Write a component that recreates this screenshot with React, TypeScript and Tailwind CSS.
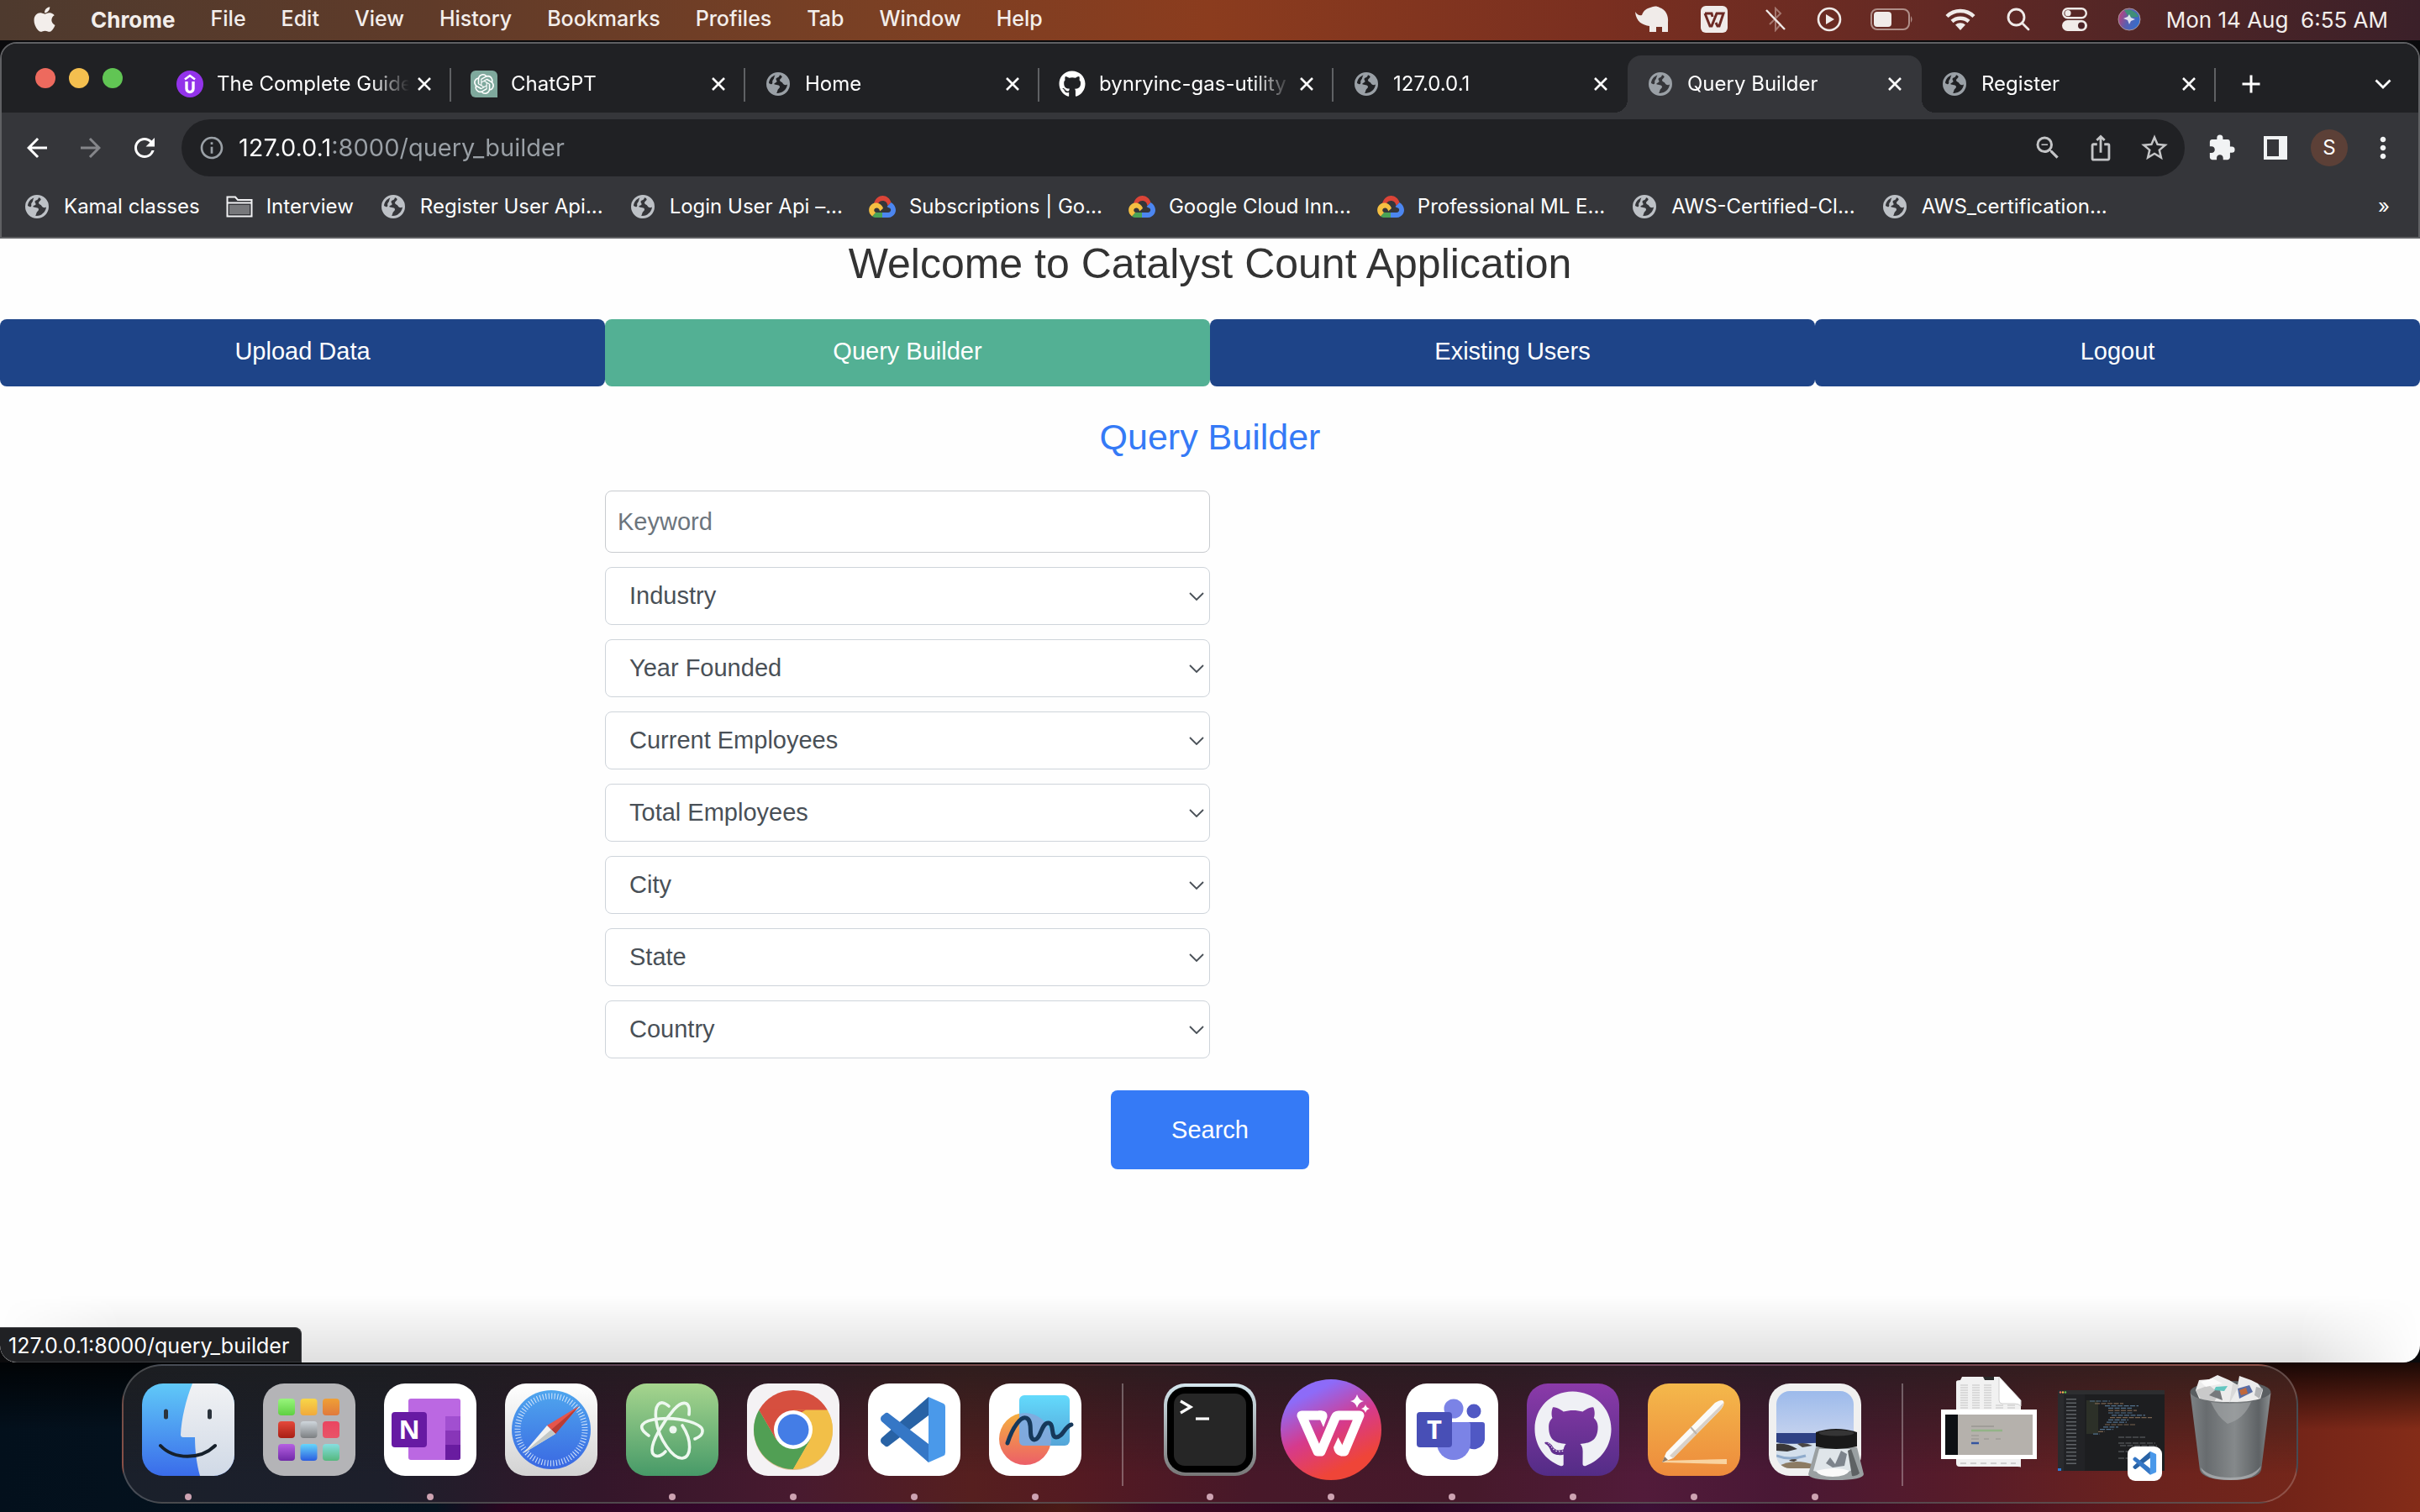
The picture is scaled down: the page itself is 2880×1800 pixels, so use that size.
import React from "react";
import type { ReactNode } from "react";
import { FaApple, FaGithub } from "react-icons/fa";
import { SiOpenai } from "react-icons/si";
import {
  MdAdd,
  MdArrowBack,
  MdArrowForward,
  MdExtension,
  MdInfoOutline,
  MdIosShare,
  MdMoreVert,
  MdRefresh,
  MdStarBorder,
  MdZoomOut,
} from "react-icons/md";

/* ---------- small icons ---------- */

function Globe({ className }: { className: string }) {
  return (
    <svg viewBox="0 0 28 28" className={className} aria-hidden="true">
      <path
        fill="currentColor"
        fillRule="evenodd"
        d="M14 0a14 14 0 1 0 0 28a14 14 0 0 0 0-28ZM16 3.2C15.4 5 14.6 6 13 6.6C11.400 7.200 11.200 8.600 12 9.600C13 10.800 12.600 12 11 12.400C9.400 12.800 8.800 14 10 14.600L14.500 15.400C16.500 16 16.400 18.400 14.800 19.400C13 20.600 13.600 23 12 24.800C18.600 25.800 24.400 20.800 25 14.600C22.800 15.800 20.600 14.800 19.600 13.200C18.600 11.400 16.400 11.600 16 9.800C15.800 8 18 7.400 18.600 5.800C18.900 4.600 17.600 3.600 16 3.200ZM10.500 3.500C6.500 4.800 3.400 8.400 3 13L5.500 14.200C7 14.600 7.600 13 7.200 11.600C6.800 9.600 9 8.600 9.200 6.800C9.300 5.400 9.800 4.400 10.500 3.500Z"
      />
    </svg>
  );
}

function Udemy() {
  return (
    <svg viewBox="0 0 32 32" className="size-8" aria-hidden="true">
      <circle cx="16" cy="16" r="16" fill="#9333ea" />
      <path d="M10 10.500L16 6L22 10.500" fill="none" stroke="#fff" strokeWidth="2.600" />
      <path d="M12 13V21.500C12 27 20 27 20 21.500V13" fill="none" stroke="#fff" strokeWidth="3.400" />
    </svg>
  );
}

function ChatGpt() {
  return (
    <span className="flex size-8 items-center justify-center rounded-l-md rounded-tr-md bg-[#7fa99d]">
      <SiOpenai className="size-6 text-white" />
    </span>
  );
}

function GoogleCloud() {
  return (
    <svg viewBox="0 0 32 26" className="h-[26px] w-8" aria-hidden="true">
      <path d="M6 9C8 3 12 0 16.500 0C21 0 25 3 26.500 8L22.500 12C22 8 19.500 6 16.500 6C14 6 12 7 11 9.500Z" fill="#db4437" />
      <path d="M26.500 8C30 10 32 13.500 32 17C32 22 28 26 23 26H16V20H23C27 20 27.500 14.500 23 14L21.500 13Z" fill="#4c86f0" />
      <path d="M16 26H9C7 26 5.500 25.500 4 24.400L8.200 19.800L9.500 20H16Z" fill="#4aa356" />
      <path d="M4 24.400C-1.500 20.500-1 12.500 4.500 9.500C9.500 7 15.500 10 17 15L13.200 18.500C12.500 14.500 9.500 13.600 7.500 15C5.500 16.500 6 19.200 8.200 20Z" fill="#f5bf42" />
    </svg>
  );
}

function Folder() {
  return (
    <svg viewBox="0 0 32 26" className="h-[26px] w-8" aria-hidden="true">
      <path d="M1.500 24.500V1.500H11L14 5H30.500V24.500Z" fill="none" stroke="#f1f1f3" strokeWidth="2" />
      <path d="M2 8.500H30" stroke="#f1f1f3" strokeWidth="2" />
      <path d="M4 11H28V22H4Z" fill="#77787b" />
    </svg>
  );
}

function Cross() {
  return (
    <svg viewBox="0 0 16 16" className="size-4" aria-hidden="true">
      <path d="M1 1L15 15M15 1L1 15" stroke="#fff" strokeWidth="2.600" />
    </svg>
  );
}

/* ---------- menu bar ---------- */

const menus = ["File", "Edit", "View", "History", "Bookmarks", "Profiles", "Tab", "Window", "Help"];

function StatusIcons() {
  return (
    <div className="flex items-center text-[#f0ebe9]">
      <svg viewBox="0 0 40 32" className="mr-[38px] h-8 w-10" fill="currentColor" aria-label="TablePlus">
        <path d="M0 7C3 11 5 12 8 11C10 5 14 3 18 2C22 0 26 0 29 2C36 4 40 11 39 20V31H32V25H25V31H17V24C9 23 1 19 0 7Z" />
      </svg>
      <svg viewBox="0 0 32 32" className="mr-[45px] size-8" aria-label="WPS">
        <rect width="32" height="32" rx="6" fill="currentColor" />
        <path d="M5 9H13L14 13M5 9L11 24H13L19 9H27L22 24H20L18 20" fill="none" stroke="#6d2a24" strokeWidth="3" />
      </svg>
      <svg viewBox="0 0 24 30" className="mr-[37px] h-[30px] w-6" fill="none" aria-label="Bluetooth off">
        <path d="M5 9L18 21L12 28V2L18 8L5 21" stroke="#a4776f" strokeWidth="2" />
        <path d="M1 4L23 27" stroke="currentColor" strokeWidth="2.400" />
      </svg>
      <svg viewBox="0 0 30 30" className="mr-[34px] size-[30px]" aria-label="Play">
        <circle cx="15" cy="15" r="13" fill="none" stroke="currentColor" strokeWidth="2.600" />
        <path d="M11 9L21 15L11 21Z" fill="currentColor" />
      </svg>
      <svg viewBox="0 0 52 26" className="mr-[37px] h-[26px] w-[52px]" aria-label="Battery">
        <rect x="1" y="1" width="45" height="24" rx="7" fill="none" stroke="#b08f89" strokeWidth="2" />
        <rect x="4" y="4" width="21" height="18" rx="4" fill="currentColor" />
        <path d="M48 9Q51 13 48 17Z" fill="#b08f89" />
      </svg>
      <svg viewBox="0 0 36 26" className="mr-[37px] h-[26px] w-9" fill="none" stroke="currentColor" strokeWidth="4.500" aria-label="Wi-Fi">
        <path d="M2 9.500A23 23 0 0 1 34 9.500M8 15.500A15 15 0 0 1 28 15.500" />
        <path d="M18 26L12 19.500A9 9 0 0 1 24 19.500Z" fill="currentColor" stroke="none" />
      </svg>
      <svg viewBox="0 0 28 28" className="mr-[38px] size-7" fill="none" stroke="currentColor" strokeWidth="2.800" aria-label="Search">
        <circle cx="11.500" cy="11.500" r="9.500" />
        <path d="M18.500 18.500L26 26" strokeLinecap="round" />
      </svg>
      <svg viewBox="0 0 30 28" className="mr-[36px] h-7 w-[30px]" aria-label="Control Center">
        <rect x="1.200" y="1.200" width="27.600" height="11" rx="5.500" fill="none" stroke="currentColor" strokeWidth="2.400" />
        <circle cx="7" cy="6.700" r="3.600" fill="currentColor" />
        <rect y="15" width="30" height="13" rx="6.500" fill="currentColor" />
        <circle cx="23" cy="21.500" r="4" fill="#4b2327" />
      </svg>
      <svg viewBox="0 0 28 28" className="size-7" aria-label="Siri">
        <defs>
          <linearGradient id="siri" x1="0" y1="0.300" x2="1" y2="0.700">
            <stop offset="0" stopColor="#c0407a" />
            <stop offset="0.450" stopColor="#5a5fb0" />
            <stop offset="1" stopColor="#2f6fd0" />
          </linearGradient>
        </defs>
        <circle cx="14" cy="14" r="13" fill="url(#siri)" stroke="#a9949c" strokeWidth="1" />
        <path d="M8 3C14 1 22 4 25 11L14 12Z" fill="#3f8f78" />
        <path d="M14 8L16 12L21 14L16 16L14 20L12 15L7 13L12 11Z" fill="#fff" opacity="0.800" />
      </svg>
    </div>
  );
}

function MenuBar() {
  return (
    <header className="flex h-12 shrink-0 items-center justify-between bg-[linear-gradient(90deg,#4e3a2e_0%,#603b29_18%,#7a4024_36%,#8b3c1e_50%,#7a2f20_66%,#632924_80%,#4a2427_92%,#3b2029_100%)] pr-[38px] pb-0.5 pl-9 text-[#f3eeeb]">
      <nav aria-label="Application menu" className="flex items-center gap-[42px] text-[25px]">
        <button type="button" aria-label="Apple menu" className="-mr-1">
          <FaApple className="size-[34px]" />
        </button>
        <button type="button" className="text-[26px] font-bold">Chrome</button>
        {menus.map((m) => (
          <button key={m} type="button" className="font-medium">{m}</button>
        ))}
      </nav>
      <div className="flex items-center gap-[30px] text-[26px]">
        <StatusIcons />
        <time className="whitespace-pre">Mon 14 Aug  6:55 AM</time>
      </div>
    </header>
  );
}

/* ---------- browser chrome ---------- */

type TabInfo = { title: string; icon: "udemy" | "gpt" | "globe" | "github"; active?: boolean; line?: boolean };

const tabs: TabInfo[] = [
  { title: "The Complete Guide", icon: "udemy", line: true },
  { title: "ChatGPT", icon: "gpt", line: true },
  { title: "Home", icon: "globe", line: true },
  { title: "bynryinc-gas-utility", icon: "github", line: true },
  { title: "127.0.0.1", icon: "globe" },
  { title: "Query Builder", icon: "globe", active: true },
  { title: "Register", icon: "globe", line: true },
];

function Favicon({ icon }: { icon: TabInfo["icon"] }) {
  if (icon === "udemy") return <Udemy />;
  if (icon === "gpt") return <ChatGpt />;
  if (icon === "github") return <FaGithub className="size-8 text-white" />;
  return <Globe className="mx-0.5 size-7 text-[#9aa0a6]" />;
}

function TabStrip() {
  return (
    <div className="flex h-[82px] items-end bg-[#202124] pr-8">
      <div className="flex w-[185px] shrink-0 items-center gap-4 self-center pl-10">
        <button type="button" aria-label="Close window" className="size-6 rounded-full bg-[#ed6a5e]" />
        <button type="button" aria-label="Minimise window" className="size-6 rounded-full bg-[#f4bf4f]" />
        <button type="button" aria-label="Zoom window" className="size-6 rounded-full bg-[#61c554]" />
      </div>
      {tabs.map((t) => (
        <div
          key={t.title}
          className={
            t.active
              ? "relative flex h-[68px] w-[350px] items-center rounded-t-2xl bg-[#35363a] pr-6 pl-[23px]"
              : "relative flex h-[68px] w-[350px] items-center pr-6 pl-[23px]"
          }
        >
          <button type="button" className="flex min-w-0 flex-1 items-center gap-4 text-left">
            <span className="shrink-0"><Favicon icon={t.icon} /></span>
            <span className="mr-2.5 flex-1 overflow-hidden mask-r-from-80% text-[24px] leading-8 whitespace-nowrap text-white">
              {t.title}
            </span>
          </button>
          <button type="button" aria-label={`Close ${t.title}`}><Cross /></button>
          {t.line && <span className="absolute top-[15px] right-0 h-10 w-0.5 bg-[#5f6164]" />}
          {t.active && (
            <>
              <span className="absolute bottom-0 -left-4 size-4 bg-[radial-gradient(circle_at_0_0,transparent_16px,#35363a_16px)]" />
              <span className="absolute -right-4 bottom-0 size-4 bg-[radial-gradient(circle_at_100%_0,transparent_16px,#35363a_16px)]" />
            </>
          )}
        </div>
      ))}
      <button type="button" aria-label="New tab" className="ml-6 flex h-[68px] items-center">
        <MdAdd className="size-9 text-white" />
      </button>
      <button type="button" aria-label="Search tabs" className="ml-auto flex h-[68px] items-center">
        <svg viewBox="0 0 20 12" className="h-3 w-5" aria-hidden="true">
          <path d="M1.500 1.500L10 10L18.500 1.500" fill="none" stroke="#fff" strokeWidth="2.800" />
        </svg>
      </button>
    </div>
  );
}

function Toolbar() {
  return (
    <div className="flex h-[84px] items-center bg-[#35363a] pr-[22px] pl-6">
      <button type="button" aria-label="Back" className="mr-7"><MdArrowBack className="size-9 text-white" /></button>
      <button type="button" aria-label="Forward" className="mr-7"><MdArrowForward className="size-9 text-[#85868a]" /></button>
      <button type="button" aria-label="Reload" className="mr-[26px]"><MdRefresh className="size-9 text-white" /></button>
      <div className="flex h-[68px] flex-1 items-center rounded-full bg-[#202124] pr-[17px] pl-5">
        <MdInfoOutline className="mr-4 size-8 text-[#9aa0a6]" />
        <input
          aria-label="Address"
          defaultValue="127.0.0.1:8000/query_builder"
          className="min-w-0 flex-1 bg-[linear-gradient(90deg,#ffffff_112px,#9aa0a6_112px)] bg-clip-text text-[29px] leading-10 text-transparent caret-white outline-none"
        />
        <button type="button" aria-label="Zoom out" className="mr-7"><MdZoomOut className="size-9 text-[#c4c5c7]" /></button>
        <button type="button" aria-label="Share" className="mr-7"><MdIosShare className="size-[34px] text-[#c4c5c7]" /></button>
        <button type="button" aria-label="Bookmark this page"><MdStarBorder className="size-[38px] text-[#c4c5c7]" /></button>
      </div>
      <button type="button" aria-label="Extensions" className="ml-[27px]"><MdExtension className="size-[34px] text-[#f1f3f4]" /></button>
      <button type="button" aria-label="Side panel" className="ml-[33px]">
        <svg viewBox="0 0 28 28" className="size-7" aria-hidden="true">
          <path fill="#f1f3f4" fillRule="evenodd" d="M0 0H28V28H0ZM4 4V24H18V4Z" />
        </svg>
      </button>
      <button type="button" aria-label="Profile" className="ml-7 size-11 rounded-full bg-[#5c4037] text-[24px] text-white">S</button>
      <button type="button" aria-label="Chrome menu" className="ml-[22px]"><MdMoreVert className="size-10 text-[#f1f3f4]" /></button>
    </div>
  );
}

const bookmarks: { label: string; kind: "globe" | "folder" | "cloud" }[] = [
  { label: "Kamal classes", kind: "globe" },
  { label: "Interview", kind: "folder" },
  { label: "Register User Api...", kind: "globe" },
  { label: "Login User Api –...", kind: "globe" },
  { label: "Subscriptions | Go...", kind: "cloud" },
  { label: "Google Cloud Inn...", kind: "cloud" },
  { label: "Professional ML E...", kind: "cloud" },
  { label: "AWS-Certified-Cl...", kind: "globe" },
  { label: "AWS_certification...", kind: "globe" },
];

function BookmarksBar() {
  return (
    <nav aria-label="Bookmarks" className="flex h-[64px] items-center gap-[31px] bg-[#35363a] pr-[34px] pb-2 pl-[26px]">
      {bookmarks.map((b) => (
        <a key={b.label} href="#" className="flex items-center gap-4 text-[24px] leading-8 whitespace-nowrap text-white">
          {b.kind === "globe" && <Globe className="mx-0.5 size-7 text-[#bdc1c6]" />}
          {b.kind === "folder" && <Folder />}
          {b.kind === "cloud" && <GoogleCloud />}
          {b.label}
        </a>
      ))}
      <button type="button" aria-label="More bookmarks" className="ml-auto text-[24px] leading-8 text-white">»</button>
    </nav>
  );
}

/* ---------- page ---------- */

const navItems = ["Upload Data", "Query Builder", "Existing Users", "Logout"];
const filters = ["Industry", "Year Founded", "Current Employees", "Total Employees", "City", "State", "Country"];

function Page() {
  return (
    <main className="relative flex-1 overflow-hidden rounded-b-[20px] bg-[#fefefe] font-['Liberation_Sans',Arial,sans-serif]">
      <h1 className="text-center text-[50px] leading-[60px] text-[#333333]">Welcome to Catalyst Count Application</h1>
      <nav aria-label="Main" className="mt-9 grid grid-cols-4">
        {navItems.map((n) => (
          <a
            key={n}
            href="#"
            className={
              n === "Query Builder"
                ? "rounded-lg bg-[#53b094] pt-4 pb-5 text-center text-[29px] leading-[44px] text-white"
                : "rounded-lg bg-[#1e4488] pt-4 pb-5 text-center text-[29px] leading-[44px] text-white"
            }
          >
            {n}
          </a>
        ))}
      </nav>
      <h2 className="mt-[34px] text-center text-[43px] leading-[52px] text-[#357af6]">Query Builder</h2>
      <form onSubmit={(e) => e.preventDefault()} className="mt-[38px]">
        <div className="mx-auto w-1/2">
          <div className="flex w-1/2 flex-col gap-[17px]">
            <input
              type="text"
              aria-label="Keyword"
              placeholder="Keyword"
              className="h-[74px] w-full rounded-lg border border-[#c8cbcf] bg-white px-3.5 text-[29px] text-[#495057] placeholder:text-[#6c757d]"
            />
            {filters.map((f) => (
              <div key={f} className="relative">
                <select
                  aria-label={f}
                  className="h-[69px] w-full appearance-none rounded-lg border border-[#ced4da] bg-white px-7 text-[29px] text-[#495057]"
                >
                  <option>{f}</option>
                </select>
                <svg viewBox="0 0 18 10" className="pointer-events-none absolute top-[30px] right-[7px] h-2.5 w-[18px]" aria-hidden="true">
                  <path d="M1 1L9 9L17 1" fill="none" stroke="#495057" strokeWidth="1.800" />
                </svg>
              </div>
            ))}
          </div>
        </div>
        <div className="mt-[38px] flex justify-center">
          <button type="submit" className="rounded-lg bg-[#357af6] px-[72px] py-[25px] text-[29px] leading-[44px] text-white">Search</button>
        </div>
      </form>
      <div className="pointer-events-none absolute inset-x-0 bottom-0 h-20 bg-linear-to-b from-transparent to-black/12 mask-x-from-95%" />
      <div className="absolute bottom-0 left-0 rounded-tr-lg rounded-bl-[20px] border border-l-0 border-[#3a3b3e] bg-[#202124] pt-1 pr-3.5 pb-0.5 pl-2.5 font-['Inter',sans-serif] text-[25px] leading-[34px] text-white">
        127.0.0.1:8000/query_builder
      </div>
    </main>
  );
}

/* ---------- dock ---------- */

function Art({ children, label, box = "0 0 110 110" }: { children: ReactNode; label: string; box?: string }) {
  return (
    <svg viewBox={box} className="size-[110px] overflow-visible" role="img" aria-label={label}>
      {children}
    </svg>
  );
}

function Gradient({ id, from, to }: { id: string; from: string; to: string }) {
  return (
    <linearGradient id={id} x1="0" y1="0" x2="0" y2="1">
      <stop offset="0" stopColor={from} />
      <stop offset="1" stopColor={to} />
    </linearGradient>
  );
}

function Finder() {
  return (
    <Art label="Finder">
      <defs>
        <Gradient id="fBlue" from="#60c9f8" to="#3a6cea" />
        <Gradient id="fWhite" from="#f1f2f4" to="#d0d9e6" />
        <clipPath id="fClip"><rect width="110" height="110" rx="25" /></clipPath>
      </defs>
      <g clipPath="url(#fClip)">
        <rect width="110" height="110" fill="url(#fBlue)" />
        <path d="M60 0C52 20 47 42 46 61Q46 64 49 64H63C63 80 65 96 69 110H110V0Z" fill="url(#fWhite)" />
      </g>
      <path d="M28.500 33V40M80.500 33V40" stroke="#2b333c" strokeWidth="5" strokeLinecap="round" />
      <path d="M22 74C38 91 70 91 87 74" fill="none" stroke="#16202b" strokeWidth="4" strokeLinecap="round" />
    </Art>
  );
}

const pads = [
  ["#98f57c", "#5fd042"], ["#f8d648", "#f0a93c"], ["#efa036", "#e0793c"],
  ["#e5493b", "#a81f14"], ["#cfd6dc", "#7c7f82"], ["#ea4560", "#e85468"],
  ["#b660e2", "#7029a8"], ["#66d6fb", "#2b5de0"], ["#86dfe0", "#55b87e"],
];

function Launchpad() {
  return (
    <Art label="Launchpad">
      <defs>{pads.map(([a, b], i) => <Gradient key={i} id={`pad${i}`} from={a} to={b} />)}</defs>
      <rect width="110" height="110" rx="25" fill="#b4b4b7" />
      {pads.map((_, i) => (
        <rect key={i} x={18 + (i % 3) * 26.5} y={18 + Math.floor(i / 3) * 27} width="20" height="20" rx="4" fill={`url(#pad${i})`} />
      ))}
    </Art>
  );
}

function OneNote() {
  return (
    <Art label="OneNote">
      <rect width="110" height="110" rx="25" fill="#fff" />
      <rect x="29" y="18" width="62" height="73" rx="3" fill="#bb68e2" />
      <path d="M73 39H91V56H73Z" fill="#a14fd0" />
      <path d="M73 56H91V73H73Z" fill="#8836b8" />
      <path d="M73 73H91V88Q91 91 88 91H73Z" fill="#691ca0" />
      <rect x="9" y="34" width="42" height="42" rx="4" fill="#671aa3" />
      <text x="30" y="66" textAnchor="middle" fontSize="31" fontWeight="700" fill="#fff" fontFamily="Open Sans, sans-serif">N</text>
    </Art>
  );
}

function Safari() {
  return (
    <Art label="Safari">
      <defs>
        <Gradient id="sBg" from="#ffffff" to="#d2d2d2" />
        <Gradient id="sBlue" from="#4fa6ee" to="#3a68e2" />
      </defs>
      <rect width="110" height="110" rx="25" fill="url(#sBg)" />
      <circle cx="55" cy="55" r="47" fill="url(#sBlue)" />
      <circle cx="55" cy="55" r="40" fill="none" stroke="#d5e6fb" strokeWidth="7" strokeDasharray="1 2.490" />
      <path d="M88 27L50 50L60 60Z" fill="#e5554b" />
      <path d="M88 27L55 55L60 60Z" fill="#b93c35" />
      <path d="M22 83L50 50L60 60Z" fill="#f2f2f2" />
      <path d="M22 83L55 55L60 60Z" fill="#c3c8c6" />
    </Art>
  );
}

function Atom() {
  return (
    <Art label="Atom">
      <defs><Gradient id="aBg" from="#a6d58e" to="#479a68" /></defs>
      <rect width="110" height="110" rx="25" fill="url(#aBg)" />
      <g fill="none" stroke="#eef8f0" strokeWidth="3.600" strokeLinecap="round">
        <path d="M27 62C12 52 18 44 40 42C66 40 92 48 91 57C91 61 87 64 82 66" />
        <path d="M51 27C40 17 33 26 36 45C39 66 56 90 67 89C78 88 79 68 67 50" />
        <path d="M75 37C77 20 67 20 57 31C44 46 31 68 31 79C31 88 40 89 47 81" />
      </g>
      <circle cx="56" cy="55" r="4.500" fill="#eef8f0" />
    </Art>
  );
}

function ChromeApp() {
  return (
    <Art label="Google Chrome">
      <rect width="110" height="110" rx="25" fill="#f4f2f4" />
      <circle cx="55" cy="56" r="47" fill="#c98b2f" opacity="0.500" />
      <path d="M55 55L14.300 31.500A47 47 0 0 1 95.700 31.500Z" fill="#d64f3f" />
      <path d="M14.300 31.500A47 47 0 0 0 55 102L75.300 66.700L55 55L34.700 66.700Z" fill="#519f54" />
      <path d="M95.700 31.500A47 47 0 0 1 55 102L75.300 66.700L70 40L55 31.500Z" fill="#f2bf48" />
      <path d="M14.300 31.500L34.700 66.700L45 45L70 31.500Z" fill="#d64f3f" />
      <circle cx="55" cy="55" r="23" fill="#fff" />
      <circle cx="55" cy="55" r="18.500" fill="#447de6" />
    </Art>
  );
}

function CodeMark() {
  return (
    <>
      <path d="M72 16L16 65Q14 68 16 71L21 75Q23 76 25 74L72 38Z" fill="#2862a5" />
      <path d="M16 45Q14 42 16 39L21 35Q23 34 25 36L72 72V94Z" fill="#3577c6" />
      <path d="M72 16L90 24Q92 25 92 28V82Q92 85 90 86L72 94Z" fill="#4a99ea" />
    </>
  );
}

function VsCode() {
  return (
    <Art label="Visual Studio Code">
      <rect width="110" height="110" rx="25" fill="#fff" />
      <CodeMark />
    </Art>
  );
}

function Freeform() {
  return (
    <Art label="Freeform">
      <defs>
        <Gradient id="frBlue" from="#63dafc" to="#55a5d8" />
        <Gradient id="frOrange" from="#f5b03f" to="#ec5f68" />
      </defs>
      <rect width="110" height="110" rx="25" fill="#fff" />
      <circle cx="43" cy="66" r="31" fill="url(#frOrange)" />
      <rect x="36" y="14" width="60" height="60" rx="6" fill="url(#frBlue)" />
      <path d="M36 36A31 31 0 0 1 73 74H42Q36 74 36 68Z" fill="#86a8dc" opacity="0.850" />
      <path d="M22 71C28 52 38 39 44 41C54 44 45 66 54 67C62 67 62 46 71 47C78 48 73 64 80 64C88 64 90 51 98 49" fill="none" stroke="#16385a" strokeWidth="5" strokeLinecap="round" />
    </Art>
  );
}

function TerminalApp() {
  return (
    <Art label="Terminal">
      <defs><Gradient id="tRim" from="#d5e6ee" to="#777777" /></defs>
      <rect width="110" height="110" rx="25" fill="url(#tRim)" />
      <rect x="4" y="4" width="102" height="102" rx="22" fill="#000" />
      <rect x="12" y="12" width="86" height="86" rx="13" fill="#262626" />
      <path d="M20 21L32 28L20 35" fill="none" stroke="#fff" strokeWidth="3.200" />
      <path d="M38 42H54" stroke="#fff" strokeWidth="3.200" />
    </Art>
  );
}

function Wps() {
  return (
    <Art label="WPS Office">
      <defs>
        <linearGradient id="wBg" x1="0.250" y1="0.050" x2="0.700" y2="0.950">
          <stop offset="0.100" stopColor="#8d6bf8" />
          <stop offset="0.500" stopColor="#d63a8c" />
          <stop offset="0.900" stopColor="#ef4538" />
        </linearGradient>
      </defs>
      <circle cx="55" cy="55" r="60" fill="url(#wBg)" />
      <path d="M44 38H20L39 81H43L60 41Q61 38 64 38H89L71 81H67" fill="none" stroke="#fff" strokeWidth="11" strokeLinejoin="round" />
      <path d="M40 32.500H45Q51 33 50.500 40L46 52L41 41Z" fill="#fff" />
      <path d="M63.500 64L58 76Q59 85 67 86.500L72 80Z" fill="#fff" />
      <path d="M86 13Q88 20 94 21Q88 22 86 29Q84 22 78 21Q84 20 86 13Z" fill="#fff" />
      <path d="M96 25Q97 29 101 30Q97 31 96 35Q95 31 91 30Q95 29 96 25Z" fill="#fff" />
    </Art>
  );
}

function Teams() {
  return (
    <Art label="Microsoft Teams">
      <rect width="110" height="110" rx="25" fill="#fff" />
      <circle cx="81" cy="33" r="8.500" fill="#5058c4" />
      <path d="M70 46H91Q94 46 94 49V67A13 13 0 0 1 70 72Z" fill="#5058c4" />
      <circle cx="57" cy="30" r="11.500" fill="#7b83e6" />
      <path d="M37 46H74Q77 46 77 49V71A20 20 0 0 1 37 71Z" fill="#7b83e6" />
      <rect x="13" y="34" width="42" height="42" rx="4" fill="#484fb6" />
      <text x="34" y="66" textAnchor="middle" fontSize="31" fontWeight="700" fill="#fff" fontFamily="Open Sans, sans-serif">T</text>
    </Art>
  );
}

function GitHubApp() {
  return (
    <Art label="GitHub Desktop">
      <defs><Gradient id="gBg" from="#8b3aa9" to="#532c86" /></defs>
      <rect width="110" height="110" rx="25" fill="url(#gBg)" />
      <FaGithub x={8} y={8} size={94} color="#eff0f5" />
    </Art>
  );
}

function Pages() {
  return (
    <Art label="Pages">
      <defs><Gradient id="pBg" from="#f4b84b" to="#ed8b3c" /></defs>
      <rect width="110" height="110" rx="25" fill="url(#pBg)" />
      <path d="M18 93L93 91V95Z" stroke="#f9d3a0" strokeWidth="2" fill="#f9d3a0" />
      <path d="M17 94L22 82L80 23Q88 18 90 21Q92 25 86 32L30 89Z" fill="#fbfaf8" />
      <path d="M30 89L86 32Q90 27 90 23L26 86Z" fill="#d8d0c8" />
      <path d="M51 52L58 60" stroke="#b9b3ad" strokeWidth="2" />
      <path d="M17 94L20 87L24 91Z" fill="#8d7a68" />
    </Art>
  );
}

function Preview() {
  return (
    <Art label="Preview">
      <defs>
        <Gradient id="skyG" from="#9cbaeb" to="#c3d1ee" />
        <clipPath id="pvClip"><rect x="9" y="9" width="92" height="92" rx="16" /></clipPath>
      </defs>
      <rect width="110" height="110" rx="25" fill="#f0f0f0" />
      <g clipPath="url(#pvClip)">
        <path d="M9 9H101V60H9Z" fill="url(#skyG)" />
        <path d="M9 59H101V74H9Z" fill="#2f4285" />
        <path d="M9 70C30 75 60 68 101 71V101H9Z" fill="#d3dfec" />
        <path d="M9 72Q20 70 34 78L22 81L9 80Z" fill="#3a3738" />
        <path d="M34 72Q42 69 52 74L40 76Z" fill="#4a4645" />
        <path d="M10 99Q30 88 54 97V101H10Z" fill="#8c7b63" />
        <path d="M24 92Q28 88 34 91L30 93Z" fill="#4a4038" />
        <path d="M9 86Q24 92 44 86" stroke="#8fabcc" strokeWidth="3" fill="none" />
      </g>
      <path d="M56 76H105L113 108Q112 115 80 115Q48 115 47 108Z" fill="#9aa0a2" />
      <path d="M60 78H97L102 102Q80 112 53 104Z" fill="#dfe5e9" />
      <path d="M68 95L73 88L79 96L86 80L93 84L90 98L76 100Z" fill="#7d848c" />
      <path d="M98 78L108 107Q104 111 99 110L94 80Z" fill="#5e6264" />
      <path d="M56 104Q80 98 96 104Q92 111 76 111Q60 111 56 104Z" fill="#fafafa" />
      <path d="M56 58Q80 50 105 58V75Q80 81 56 75Z" fill="#191919" />
      <ellipse cx="80.500" cy="59" rx="21" ry="3.500" fill="#353535" />
    </Art>
  );
}

function Documents() {
  return (
    <Art label="Documents">
      <path d="M22 -8H66L92 20V100Q92 99 88 99H19Q15 99 15 95V-2Q15 -4 20 -4Z" fill="#f1f1f1" />
      <path d="M20 2H60M20 5H60M20 8H60M20 11H60M20 14H60M20 17H60M20 20H62M20 23H62M20 26H88M20 29H88" stroke="#d2d2d2" strokeWidth="1.600" strokeDasharray="9 5" />
      <path d="M47 -8H60V-4H49Z" fill="#2a2a2a" />
      <path d="M66 -8L92 20V27Q90 24 84 24H70Q66 24 66 20Z" fill="#fff" stroke="#cfcfcf" strokeWidth="1" />
      <rect x="-3" y="31" width="114" height="59" fill="#fff" />
      <rect x="2" y="37" width="104" height="48" fill="#b5b1ac" />
      <rect x="2" y="37" width="15" height="48" fill="#0d1014" />
      <path d="M33 51H60" stroke="#8b8985" strokeWidth="1" />
      <path d="M33 56H70" stroke="#93b487" strokeWidth="2.500" />
      <path d="M33 62H42M33 66H42M48 66H54M62 66H68" stroke="#94928e" strokeWidth="1" />
      <path d="M33 71H42" stroke="#3455a0" strokeWidth="2.500" />
      <path d="M20 95H86" stroke="#cfcfcf" strokeWidth="2" strokeDasharray="7 5" />
    </Art>
  );
}

const codeLines = [
  [38, 62], [44, 78], [56, 96], [60, 88], [60, 94], [60, 90], [64, 104], [62, 112], [60, 84], [58, 82], [56, 92], [54, 72], [50, 66], [48, 56], [42, 50],
];

function CodeWindow() {
  return (
    <Art label="Visual Studio Code window">
      <g transform="translate(-8 8)">
        <rect width="127" height="96" fill="#1d1e20" />
        <rect width="127" height="5" fill="#2d2e30" />
        <rect width="7" height="96" fill="#2a2b2e" />
        <rect x="7" y="5" width="25" height="91" fill="#222326" />
        <rect x="34" y="12" width="14" height="40" fill="#2c3028" />
        <circle cx="3" cy="2.500" r="1.200" fill="#ed6a5e" />
        <circle cx="6" cy="2.500" r="1.200" fill="#f4bf4f" />
        <circle cx="9" cy="2.500" r="1.200" fill="#61c554" />
        <path d="M10 10V90" stroke="#5f6367" strokeWidth="12" strokeDasharray="1.500 3" transform="translate(6 0)" />
        {codeLines.map(([a, b], i) => (
          <path key={i} d={`M${a} ${13 + i * 2.8}H${b}`} stroke={i % 3 === 1 ? "#7a6450" : "#52708c"} strokeWidth="1.200" strokeDasharray="6 1.500" />
        ))}
        <path d="M72 56H104M72 63H116M74 66H118M72 73H92M72 81H90" stroke="#66696c" strokeWidth="1.200" strokeDasharray="7 1.500" />
        <rect y="93" width="4" height="3" fill="#2f7bd8" />
      </g>
      <rect x="75" y="75" width="41" height="41" rx="9" fill="#fff" />
      <g transform="translate(76 75) scale(0.360)"><CodeMark /></g>
    </Art>
  );
}

function Trash() {
  return (
    <Art label="Trash">
      <defs>
        <linearGradient id="bin" x1="0" x2="1">
          <stop offset="0" stopColor="#7d8285" />
          <stop offset="0.200" stopColor="#686c6f" />
          <stop offset="0.550" stopColor="#85898b" />
          <stop offset="0.850" stopColor="#5e6265" />
          <stop offset="1" stopColor="#8a8e90" />
        </linearGradient>
      </defs>
      <ellipse cx="53.500" cy="10" rx="48" ry="13" fill="#5a5e61" />
      <path d="M12 8L16 -4L28 -5L38 -10L52 -4L62 2L64 -9L78 -4L86 0L92 8L88 22H18Z" fill="#ececec" />
      <path d="M12 8L28 2L40 12L34 22H20Z" fill="#c9c9c9" />
      <path d="M18 -2L32 -6L44 0L24 4Z" fill="#fafafa" />
      <path d="M28 14L40 4L44 20Z" fill="#77797c" />
      <path d="M36 4L50 3L46 9L34 8Z" fill="#63c6c0" />
      <path d="M56 0L52 24L64 2Z" fill="#d9d9d9" />
      <path d="M62 6L76 2L80 10L64 18Z" fill="#5a6ea4" />
      <path d="M64 8L72 5L74 12L66 14Z" fill="#c0683c" />
      <path d="M84 4L92 6L88 18L82 14Z" fill="#b2b4b6" />
      <path d="M5.500 11C14 26 92 26 101.500 11L90 103Q86 115 53.500 115Q21 115 17 103Z" fill="url(#bin)" />
      <path d="M30 22Q54 26 78 22Q70 42 50 48Q38 40 30 22Z" fill="#a5a8aa" opacity="0.600" />
      <path d="M18 100Q28 112 53 112Q80 112 90 98Q86 115 53.500 115Q21 115 18 100Z" fill="#b3b7b9" opacity="0.700" />
    </Art>
  );
}

type DockApp = { name: string; art: ReactNode; running: boolean };

const appsLeft: DockApp[] = [
  { name: "finder", art: <Finder />, running: true },
  { name: "launchpad", art: <Launchpad />, running: false },
  { name: "onenote", art: <OneNote />, running: true },
  { name: "safari", art: <Safari />, running: false },
  { name: "atom", art: <Atom />, running: true },
  { name: "chrome", art: <ChromeApp />, running: true },
  { name: "code", art: <VsCode />, running: true },
  { name: "freeform", art: <Freeform />, running: true },
];
const appsMiddle: DockApp[] = [
  { name: "terminal", art: <TerminalApp />, running: true },
  { name: "wps", art: <Wps />, running: true },
  { name: "teams", art: <Teams />, running: true },
  { name: "github", art: <GitHubApp />, running: true },
  { name: "pages", art: <Pages />, running: true },
  { name: "preview", art: <Preview />, running: true },
];
const appsRight: DockApp[] = [
  { name: "documents", art: <Documents />, running: false },
  { name: "window", art: <CodeWindow />, running: false },
  { name: "trash", art: <Trash />, running: false },
];

function DockGroup({ apps }: { apps: DockApp[] }) {
  return (
    <>
      {apps.map((a) => (
        <button key={a.name} type="button" className="flex flex-col items-center gap-[21px]">
          {a.art}
          <span className={a.running ? "size-2 rounded-full bg-[#cda3b2]" : "size-2"} />
        </button>
      ))}
    </>
  );
}

function Dock() {
  const divider = <span className="mx-3.5 h-[122px] w-0.5 bg-white/30" />;
  return (
    <footer className="shrink-0 bg-[linear-gradient(180deg,#000000cc_0%,#00000000_45%),linear-gradient(90deg,#03101c_0%,#061420_18%,#2c0520_21%,#3a0a34_37%,#3d1418_40%,#4a1a16_44%,#3c0a22_48%,#2b0620_58%,#3c1036_68%,#3a0a26_74%,#4c1222_82%,#6a2018_92%,#842c18_100%)] pt-0.5 pb-2.5">
      <div className="mx-auto flex w-fit gap-[34px] rounded-[48px] border-2 border-white/20 bg-[linear-gradient(180deg,#1c1c1caa_0%,#1c1c1c00_80%),linear-gradient(90deg,#1a202b_0%,#1d1f2b_12%,#34162a_22%,#481a2f_31%,#561f1f_39%,#541a22_44%,#471829_52%,#46192b_62%,#521b3a_70%,#491835_76%,#561b2a_84%,#69221f_92%,#74261a_100%)] px-[22px] pt-[21px] pb-0.5">
        <DockGroup apps={appsLeft} />
        {divider}
        <DockGroup apps={appsMiddle} />
        {divider}
        <DockGroup apps={appsRight} />
      </div>
    </footer>
  );
}

export default function App() {
  return (
    <div className="flex min-h-screen flex-col bg-[#0a0a0c] font-['Inter',sans-serif]">
      <MenuBar />
      <div className="mt-0.5 flex flex-1 flex-col">
        <div className="overflow-hidden rounded-t-[20px] border-2 border-[#5f6063]">
          <TabStrip />
          <Toolbar />
          <BookmarksBar />
        </div>
        <Page />
      </div>
      <Dock />
    </div>
  );
}
